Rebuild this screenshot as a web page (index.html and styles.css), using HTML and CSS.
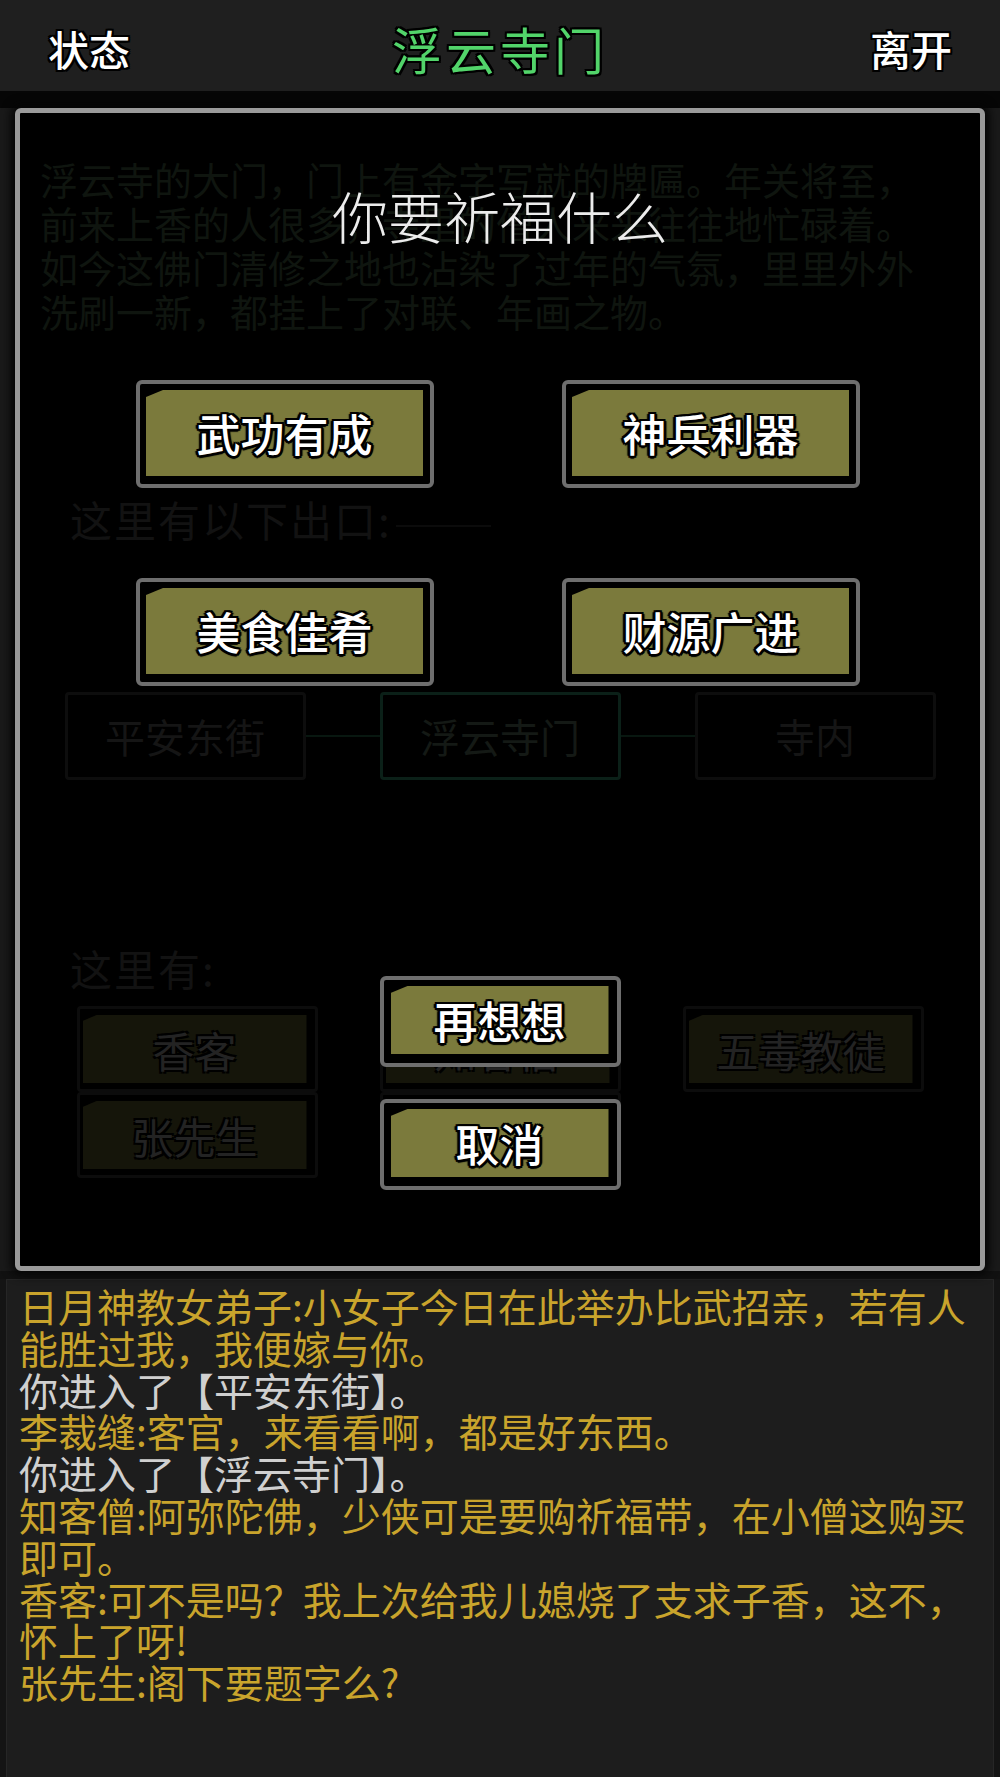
FILE: index.html
```html
<!doctype html>
<html lang="zh-CN">
<head>
	<meta charset="UTF-8">
	<title>浮云寺门</title>
	<link rel="stylesheet" href="styles.css">
</head>
<body>
	<div class="screen">
		<header class="topbar">
			<span class="top_btn">状态</span>
			<span class="place_title">浮云寺门</span>
			<span class="top_btn">离开</span>
		</header>

		<main class="stage">
			<section class="panel">
				<!-- 底层场景（被对话框遮住） -->
				<div class="scene">
					<p class="scene_desc">浮云寺的大门，门上有金字写就的牌匾。年关将至，<br>前来上香的人很多，寺里的僧人来来往往地忙碌着。<br>如今这佛门清修之地也沾染了过年的气氛，里里外外<br>洗刷一新，都挂上了对联、年画之物。</p>

					<p class="scene_label exits_label">这里有以下出口:<span class="label_line"></span></p>
					<div class="exits">
						<div class="exit">平安东街</div>
						<span class="exit_link"></span>
						<div class="exit current">浮云寺门</div>
						<span class="exit_link"></span>
						<div class="exit">寺内</div>
					</div>

					<p class="scene_label npc_label">这里有:</p>
					<div class="npcs">
						<div class="npc_col">
							<div class="npc"><span class="npc_face">香客</span></div>
							<div class="npc"><span class="npc_face">张先生</span></div>
						</div>
						<div class="npc_col">
							<div class="npc"><span class="npc_face">知客僧</span></div>
							<div class="npc"><span class="npc_face">李裁缝</span></div>
						</div>
						<div class="npc_col">
							<div class="npc"><span class="npc_face">五毒教徒</span></div>
						</div>
					</div>
				</div>

				<!-- 祈福对话框 -->
				<div class="dialog">
					<h2 class="dialog_title">你要祈福什么</h2>
					<div class="choices">
						<div class="choice"><span class="face">武功有成</span></div>
						<div class="choice"><span class="face">神兵利器</span></div>
						<div class="choice"><span class="face">美食佳肴</span></div>
						<div class="choice"><span class="face">财源广进</span></div>
					</div>
					<div class="actions">
						<div class="choice small"><span class="face">再想想</span></div>
						<div class="choice small"><span class="face">取消</span></div>
					</div>
				</div>
			</section>
		</main>

		<section class="log">
			<p class="say">日月神教女弟子:小女子今日在此举办比武招亲，若有人<br>能胜过我，我便嫁与你。</p>
			<p class="sys">你进入了【平安东街】。</p>
			<p class="say">李裁缝:客官，来看看啊，都是好东西。</p>
			<p class="sys">你进入了【浮云寺门】。</p>
			<p class="say">知客僧:阿弥陀佛，少侠可是要购祈福带，在小僧这购买<br>即可。</p>
			<p class="say">香客:可不是吗？我上次给我儿媳烧了支求子香，这不，<br>怀上了呀!</p>
			<p class="say">张先生:阁下要题字么?</p>
		</section>
	</div>
</body>
</html>
```

FILE: styles.css
```css
*{
	margin: 0;
	padding: 0;
	box-sizing: border-box;
}
body{
	background: #141414;
	font-family: "Noto Sans CJK SC", "Noto Sans", sans-serif;
}
.screen{
	width: 1000px;
	height: 1777px;
	overflow: hidden;
	display: flex;
	flex-direction: column;
}

/* 顶栏 */
.topbar{
	height: 91px;
	background: #1f1f1f;
	display: flex;
	align-items: center;
	justify-content: space-between;
	padding: 4px 48px 0;
}
.top_btn{
	font-size: 41px;
	line-height: 50px;
	font-weight: 500;
	color: #fff;
	text-shadow: 2px 0 0 #000, -2px 0 0 #000, 0 2px 0 #000, 0 -2px 0 #000,
		2px 2px 0 #000, -2px -2px 0 #000, 2px -2px 0 #000, -2px 2px 0 #000;
}
.place_title{
	font-size: 50px;
	line-height: 56px;
	letter-spacing: 4px;
	color: #52d46a;
	text-shadow: 2px 0 0 #000, -2px 0 0 #000, 0 2px 0 #000, 0 -2px 0 #000,
		2px 2px 0 #000, -2px -2px 0 #000, 2px -2px 0 #000, -2px 2px 0 #000;
}

/* 中间场景区 */
.stage{
	height: 1188px;
	padding: 17px 15px 8px;
	background: linear-gradient(#060606 17px, #1a1a1a 17px, #1a1a1a 1180px, #111 1180px);
}
.panel{
	position: relative;
	height: 100%;
	background: #000;
	border: 5px solid #9a9a9a;
	border-radius: 6px;
	box-shadow: 0 0 10px 4px #050505;
}

.scene{
	padding: 44px 20px 0;
}
.scene_desc{
	font-size: 38px;
	line-height: 44px;
	color: #0f150f;
}
.scene_label{
	font-size: 42px;
	line-height: 48px;
	letter-spacing: 2px;
	color: #121212;
	padding-left: 30px;
}
.exits_label{
	margin-top: 162px;
}
.label_line{
	display: inline-block;
	width: 95px;
	height: 2px;
	margin-left: 4px;
	background: #0b0b0b;
	vertical-align: middle;
}
.exits{
	margin-top: 149px;
	display: flex;
	justify-content: center;
	align-items: center;
}
.exit{
	width: 241px;
	height: 88px;
	border: 3px solid #0d0d0d;
	border-radius: 4px;
	display: flex;
	align-items: center;
	justify-content: center;
	font-size: 40px;
	color: #151515;
}
.exit.current{
	border-color: #0b2018;
	color: #141915;
}
.exit_link{
	width: 74px;
	height: 2px;
	background: #081710;
}
.npc_label{
	margin-top: 164px;
}
.npcs{
	margin-top: 14px;
	display: flex;
	justify-content: center;
	gap: 62px;
}
.npc_col{
	width: 241px;
	display: flex;
	flex-direction: column;
}
.npc{
	height: 86px;
	border: 3px solid #0c0c0c;
	border-radius: 4px;
	padding: 6px 8px 6px 3px;
}
.npc_face{
	height: 100%;
	display: flex;
	align-items: center;
	justify-content: center;
	background: #15150a;
	clip-path: polygon(14px 0, 100% 0, 100% 100%, 0 100%, 0 6px);
	font-size: 42px;
	color: #232323;
	text-shadow: 2px 2px 0 #000, -2px -2px 0 #000, 2px -2px 0 #000, -2px 2px 0 #000;
}

/* 对话框 */
.dialog{
	position: absolute;
	inset: 0;
	display: flex;
	flex-direction: column;
	align-items: center;
}
.dialog_title{
	margin-top: 72px;
	font-size: 56px;
	line-height: 60px;
	font-weight: 300;
	color: #ececec;
}
.choices{
	margin-top: 135px;
	margin-left: -4px;
	display: grid;
	grid-template-columns: 298px 298px;
	column-gap: 128px;
	row-gap: 90px;
}
.choice{
	width: 298px;
	height: 108px;
	background: #000;
	border: 4px solid #6e6e6e;
	border-radius: 6px;
	padding: 6px 7px 8px 6px;
}
.choice .face{
	height: 100%;
	display: flex;
	align-items: center;
	justify-content: center;
	background: #7b7a3c;
	clip-path: polygon(17px 0, 100% 0, 100% 100%, 0 100%, 0 7px);
	font-size: 44px;
	font-weight: 500;
	color: #fff;
	text-shadow: 2px 0 0 #000, -2px 0 0 #000, 0 2px 0 #000, 0 -2px 0 #000,
		2px 2px 0 #000, -2px -2px 0 #000, 2px -2px 0 #000, -2px 2px 0 #000,
		0 3px 1px #000, 3px 0 1px #000, -3px 0 1px #000;
}
.actions{
	margin-top: 290px;
	display: flex;
	flex-direction: column;
	gap: 32px;
}
.choice.small{
	width: 241px;
	height: 91px;
	padding: 6px 8px 9px 7px;
}

/* 消息记录 */
.log{
	flex: 1;
	margin: 0 6px;
	background: #1d1d1d;
	border: 1px solid #262626;
	border-bottom: 0;
	padding: 5px 20px 0 12px;
	font-size: 39px;
	line-height: 41.8px;
	white-space: nowrap;
}
.say{
	color: #c9a42c;
}
.sys{
	color: #d0d0d0;
}
```
